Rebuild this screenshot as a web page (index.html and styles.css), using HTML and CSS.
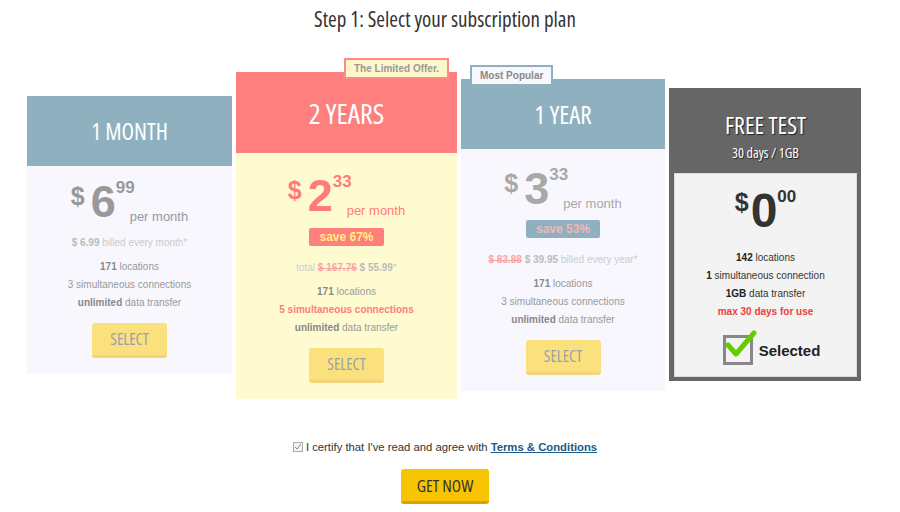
FILE: index.html
```html
<!DOCTYPE html>
<html lang="en">
<head>
    <meta charset="UTF-8">
    <title>Select your subscription plan</title>
    <link rel="stylesheet" href="styles.css">
</head>
<body>
    <h1 class="step-title">Step 1: Select your subscription plan</h1>

    <div class="plans">
        <!-- 1 month -->
        <div class="plan plan-month">
            <div class="plan-head"><h2>1 MONTH</h2></div>
            <div class="plan-body">
                <div class="price">
                    <span class="cur">$</span><span class="big">6</span><span class="cents">99</span><span class="per">per month</span>
                </div>
                <p class="billed"><b>$ 6.99</b> billed every month*</p>
                <ul class="features">
                    <li><b>171</b> locations</li>
                    <li>3 simultaneous connections</li>
                    <li><b>unlimited</b> data transfer</li>
                </ul>
                <button class="select-btn">SELECT</button>
            </div>
        </div>

        <!-- 2 years -->
        <div class="plan plan-2y">
            <span class="tag tag-offer">The Limited Offer.</span>
            <div class="plan-head"><h2>2 YEARS</h2></div>
            <div class="plan-body">
                <div class="price">
                    <span class="cur">$</span><span class="big">2</span><span class="cents">33</span><span class="per">per month</span>
                </div>
                <span class="save">save 67%</span>
                <p class="billed">total <s>$ 167.76</s> <b>$ 55.99</b>*</p>
                <ul class="features">
                    <li><b>171</b> locations</li>
                    <li class="hot"><b>5 simultaneous connections</b></li>
                    <li><b>unlimited</b> data transfer</li>
                </ul>
                <button class="select-btn">SELECT</button>
            </div>
        </div>

        <!-- 1 year -->
        <div class="plan plan-year">
            <span class="tag tag-popular">Most Popular</span>
            <div class="plan-head"><h2>1 YEAR</h2></div>
            <div class="plan-body">
                <div class="price">
                    <span class="cur">$</span><span class="big">3</span><span class="cents">33</span><span class="per">per month</span>
                </div>
                <span class="save">save 53%</span>
                <p class="billed"><s>$ 83.88</s> <b>$ 39.95</b> billed every year*</p>
                <ul class="features">
                    <li><b>171</b> locations</li>
                    <li>3 simultaneous connections</li>
                    <li><b>unlimited</b> data transfer</li>
                </ul>
                <button class="select-btn">SELECT</button>
            </div>
        </div>

        <!-- free test -->
        <div class="plan plan-free">
            <div class="plan-head">
                <h2>FREE TEST</h2>
                <p class="sub">30 days / 1GB</p>
            </div>
            <div class="plan-body">
                <div class="price">
                    <span class="cur">$</span><span class="big">0</span><span class="cents">00</span>
                </div>
                <ul class="features">
                    <li><b>142</b> locations</li>
                    <li><b>1</b> simultaneous connection</li>
                    <li><b>1GB</b> data transfer</li>
                    <li class="warn"><b>max 30 days for use</b></li>
                </ul>
                <div class="selected">
                    <span class="check-box">
                        <svg width="36" height="30" viewBox="0 0 36 30">
                            <path d="M5 15 L13 24 L31 3" fill="none" stroke="#66cc00" stroke-width="5" stroke-linecap="round" stroke-linejoin="round"/>
                        </svg>
                    </span>
                    <span>Selected</span>
                </div>
            </div>
        </div>
    </div>

    <div class="agree">
        <span class="tick">
            <svg width="8" height="8" viewBox="0 0 8 8"><path d="M1 4 L3 6 L7 1" fill="none" stroke="#888" stroke-width="1"/></svg>
        </span>
        I certify that I've read and agree with <a href="#">Terms &amp; Conditions</a>
    </div>
    <div class="cta">
        <button class="get-btn">GET NOW</button>
    </div>
</body>
</html>
```

FILE: styles.css
```css
body {
    margin: 0;
    font-family: "Liberation Sans", Arial, sans-serif;
    background-color: white;
    color: #333;
}
.step-title {
    font-family: "Open Sans", sans-serif;
    font-stretch: 75%;
    font-weight: 500;
    font-size: 21px;
    text-align: center;
    color: #333;
    margin: 6px 0 0 -10px;
    height: 26px;
    line-height: 26px;
}
.plans {
    display: flex;
    align-items: flex-start;
    gap: 4px;
    margin: 0 0 0 27px;
}
.plan {
    position: relative;
}
.plan-head {
    color: white;
    text-align: center;
    display: flex;
    flex-direction: column;
    justify-content: center;
}
.plan-head h2 {
    margin: 0;
    font-family: "Open Sans", sans-serif;
    font-stretch: 75%;
    font-weight: 500;
    font-size: 25px;
}
.plan-body {
    text-align: center;
}
.tag {
    position: absolute;
    top: -14px;
    font-size: 10px;
    font-weight: bold;
    padding: 3px 8px;
    border: 2px solid;
}
/* price block */
.price {
    display: flex;
    justify-content: center;
    align-items: flex-start;
    font-weight: bold;
}
.cur {
    font-size: 25px;
    margin-top: 5px;
    margin-right: 6px;
}
.big {
    font-size: 45px;
    line-height: 50px;
}
.cents {
    font-size: 17px;
    margin-top: 1px;
}
.per {
    font-weight: normal;
    font-size: 13px;
    align-self: flex-end;
    margin-left: -5px;
    margin-bottom: 5px;
}
.billed {
    font-size: 10px;
    color: #ccc;
    margin: 0;
}
.billed b {
    color: #bbb;
}
.billed s {
    color: #f9a3a3;
    font-weight: bold;
}
.features {
    list-style: none;
    padding: 0;
    margin: 0;
    font-size: 10px;
    line-height: 18px;
    color: #999;
}
.features b {
    color: #888;
}
.save {
    display: inline-block;
    font-size: 12px;
    font-weight: bold;
    padding: 2px 10px;
    border-radius: 2px;
}
.select-btn {
    width: 75px;
    height: 35px;
    border: none;
    border-bottom: 3px solid #f2d47a;
    border-radius: 3px;
    background-color: #fbe07e;
    color: #97a0ab;
    font-family: "Open Sans", sans-serif;
    font-stretch: 75%;
    font-size: 16px;
    cursor: pointer;
}
/* 1 month */
.plan-month {
    width: 205px;
    margin-top: 64px;
    background-color: #f8f7fe;
}
.plan-month .plan-head {
    height: 70px;
    background-color: #8fb1bf;
}
.plan-month .plan-head h2 {
    font-size: 23px;
}
.plan-month .plan-body {
    height: 208px;
    color: #999;
}
.plan-month .price {
    padding-top: 11px;
    height: 52px;
}
.plan-month .billed {
    margin-top: 8px;
    margin-bottom: 10px;
}
.plan-month .select-btn {
    margin-top: 11px;
}
/* 2 years */
.plan-2y {
    width: 221px;
    margin-top: 40px;
    background-color: #fffbd1;
}
.plan-2y .plan-head {
    height: 81px;
    background-color: #ff7f7f;
}
.plan-2y .plan-head h2 {
    font-size: 28px;
}
.plan-2y .plan-body {
    height: 246px;
    color: #ff7b7b;
}
.plan-2y .price {
    padding-top: 18px;
    height: 52px;
}
.plan-2y .save {
    margin-top: 5px;
    background-color: #ff7f7f;
    color: #fff27a;
}
.plan-2y .billed {
    margin-top: 16px;
    margin-bottom: 10px;
}
.plan-2y .features li.hot,
.plan-2y .features li.hot b {
    color: #ff7b7b;
}
.plan-2y .select-btn {
    margin-top: 11px;
}
.tag-offer {
    right: 8px;
    background-color: #fff6c9;
    border-color: #ff8a8a;
    color: #999;
}
/* 1 year */
.plan-year {
    width: 204px;
    margin-top: 47px;
    background-color: #f8f7fe;
}
.plan-year .plan-head {
    height: 70px;
    background-color: #8fb1bf;
}
.plan-year .plan-body {
    height: 242px;
    color: #a8a8a8;
}
.plan-year .price {
    padding-top: 15px;
    height: 52px;
}
.plan-year .save {
    margin-top: 4px;
    background-color: #8fb1bf;
    color: #f6b5b5;
}
.plan-year .billed {
    margin-top: 16px;
    margin-bottom: 10px;
}
.plan-year .select-btn {
    margin-top: 11px;
}
.tag-popular {
    left: 9px;
    background-color: #f8f7fe;
    border-color: #8fb1bf;
    color: #888;
}
/* free test */
.plan-free {
    width: 192px;
    margin-top: 56px;
    background-color: #666;
    padding: 0 4px 4px 5px;
    box-sizing: border-box;
}
.plan-free .plan-head {
    height: 85px;
    text-shadow: 1px 1px 1px #222;
}
.plan-free .plan-head h2 {
    margin-top: 8px;
    font-size: 24px;
}
.plan-free .sub {
    margin: 2px 0 0;
    font-family: "Open Sans", sans-serif;
    font-stretch: 75%;
    font-weight: 500;
    font-size: 14px;
}
.plan-free .plan-body {
    height: 202px;
    background-color: #f3f3f3;
    border: 1px solid #ddd;
    color: #333;
}
.plan-free .price {
    padding-top: 12px;
    height: 63px;
}
.plan-free .cur {
    margin-top: 2px;
    margin-right: 2px;
}
.plan-free .big {
    font-size: 48px;
}
.plan-free .features {
    color: #333;
}
.plan-free .features b {
    color: #222;
}
.plan-free .features li.warn b {
    color: #f03c3c;
}
.selected {
    display: flex;
    justify-content: center;
    align-items: center;
    gap: 6px;
    margin-top: 14px;
    padding-left: 12px;
    font-size: 15px;
    font-weight: bold;
    color: #222;
}
.check-box {
    position: relative;
    width: 24px;
    height: 24px;
    border: 3px solid #888;
}
.check-box svg {
    position: absolute;
    left: -3px;
    top: -8px;
}
/* agreement */
.agree {
    display: flex;
    justify-content: center;
    align-items: center;
    gap: 3px;
    font-size: 11.3px;
    color: #333;
    margin-top: 42px;
    margin-left: -10px;
}
.tick {
    display: inline-flex;
    align-items: center;
    justify-content: center;
    width: 8px;
    height: 8px;
    border: 1px solid #aaa;
    background-color: #f4f4f4;
}
.agree a {
    color: #1d5a85;
    font-weight: bold;
}
.cta {
    text-align: center;
    margin-top: 16px;
    margin-left: -10px;
}
.get-btn {
    width: 88px;
    height: 35px;
    background-color: #f8c300;
    border: none;
    border-bottom: 3px solid #dca300;
    border-radius: 3px;
    color: #333;
    font-family: "Open Sans", sans-serif;
    font-stretch: 75%;
    font-weight: 500;
    font-size: 17px;
    cursor: pointer;
}
```
